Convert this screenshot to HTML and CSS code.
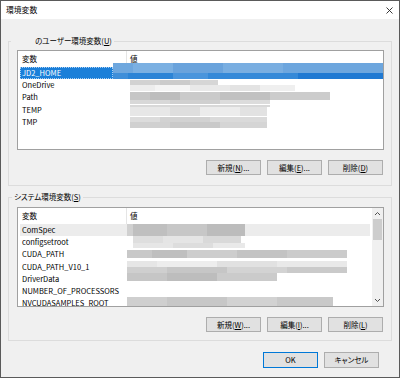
FILE: index.html
```html
<!DOCTYPE html>
<html lang="ja">
<head>
<meta charset="utf-8">
<title>環境変数</title>
<link rel="stylesheet" href="styles.css">
</head>
<body>
<div class="window">
  <div class="titlebar">
    <span class="title">環境変数</span>
    <svg class="close" width="7" height="7" viewBox="0 0 7 7"><path d="M0.5 0.5 L6.5 6.5 M6.5 0.5 L0.5 6.5" stroke="#222" stroke-width="0.9" fill="none"/></svg>
  </div>
  <div class="content">
    <div class="group g1">
      <div class="legend legend-user">のユーザー環境変数(<u>U</u>)</div>
      <div class="listview lv1">
        <div class="lv-main">
          <div class="lv-header"><div class="col-name">変数</div><div class="col-val">値</div></div>
          <div class="row selected">
            <div class="name">JD2_HOME</div>
            <div class="val sel-val"><div class="b sb1"></div><div class="b sb2"></div></div>
          </div>
          <div class="row"><div class="name">OneDrive</div><div class="val v1"><div class="b u1a"></div><div class="b u1b"></div></div></div>
          <div class="row"><div class="name">Path</div><div class="val v1"><div class="b u2a"></div><div class="b u2b"></div></div></div>
          <div class="row"><div class="name">TEMP</div><div class="val v1"><div class="b u3a"></div><div class="b u3b"></div></div></div>
          <div class="row"><div class="name">TMP</div><div class="val v1"><div class="b u4a"></div><div class="b u4b"></div></div></div>
        </div>
      </div>
      <div class="btnrow">
        <button class="btn">新規(<u>N</u>)...</button>
        <button class="btn">編集(<u>E</u>)...</button>
        <button class="btn">削除(<u>D</u>)</button>
      </div>
    </div>

    <div class="group g2">
      <div class="legend legend-sys">システム環境変数(<u>S</u>)</div>
      <div class="listview lv2">
        <div class="lv-main">
          <div class="lv-header"><div class="col-name">変数</div><div class="col-val">値</div></div>
          <div class="row hover"><div class="name">ComSpec</div><div class="val v2"><div class="b s1a"></div></div></div>
          <div class="row"><div class="name">configsetroot</div><div class="val v2"><div class="b s2a"></div><div class="b s2b"></div></div></div>
          <div class="row"><div class="name">CUDA_PATH</div><div class="val v2"><div class="b s3a"></div><div class="b s3b"></div></div></div>
          <div class="row"><div class="name">CUDA_PATH_V10_1</div><div class="val v2"><div class="b s4a"></div><div class="b s4b"></div></div></div>
          <div class="row"><div class="name">DriverData</div><div class="val v2"><div class="b s5a"></div></div></div>
          <div class="row"><div class="name">NUMBER_OF_PROCESSORS</div><div class="val v2"></div></div>
          <div class="row"><div class="name">NVCUDASAMPLES_ROOT</div><div class="val v2"><div class="b s7a"></div></div></div>
        </div>
        <div class="scrollbar">
          <div class="sb-btn"><svg width="7" height="5" viewBox="0 0 7 5"><path d="M1 4 L3.5 1.5 L6 4" stroke="#505050" stroke-width="1" fill="none"/></svg></div>
          <div class="sb-track"><div class="sb-thumb"></div></div>
          <div class="sb-btn"><svg width="7" height="5" viewBox="0 0 7 5"><path d="M1 1 L3.5 3.5 L6 1" stroke="#505050" stroke-width="1" fill="none"/></svg></div>
        </div>
      </div>
      <div class="btnrow">
        <button class="btn">新規(<u>W</u>)...</button>
        <button class="btn">編集(<u>I</u>)...</button>
        <button class="btn">削除(<u>L</u>)</button>
      </div>
    </div>

    <div class="dlgbtns">
      <button class="btn default">OK</button>
      <button class="btn">キャンセル</button>
    </div>
  </div>
</div>
</body>
</html>
```

FILE: styles.css
```css
html, body {
  margin: 0;
  padding: 0;
  background: #f0f0f0;
}

.window {
  width: 400px;
  height: 378px;
  box-sizing: border-box;
  border: 1px solid #5a5a5a;
  background: #f0f0f0;
  font-family: "Noto Sans CJK JP", sans-serif;
  font-size: 7.5px;
  font-weight: 400;
  font-feature-settings: "palt";
  color: #000;
  display: flex;
  flex-direction: column;
  overflow: hidden;
}

.titlebar {
  height: 18px;
  background: #fff;
  display: flex;
  align-items: center;
  justify-content: space-between;
  padding: 0 6px 0 5px;
  flex: none;
}

.title {
  font-size: 7.8px;
  line-height: 12px;
}

.close {
  display: block;
}

.content {
  flex: 1;
  display: flex;
  flex-direction: column;
  padding: 0 7px;
}

.group {
  border: 1px solid #dcdcdc;
  display: flex;
  flex-direction: column;
  padding: 0 7px 10px 8px;
}

.g1 {
  margin-top: 22px;
}

.g2 {
  margin-top: 11px;
  padding-bottom: 8px;
}

.legend {
  align-self: flex-start;
  height: 12px;
  line-height: 12px;
  margin: -7px 0 0 -6px;
  padding: 0 2px;
  background: #f0f0f0;
  white-space: nowrap;
}

.legend-user {
  padding-left: 24px;
}

.legend-sys {
  margin-left: -5px;
}

.listview {
  height: 100px;
  box-sizing: border-box;
  border: 1px solid #a0a0a0;
  background: #fff;
  display: flex;
  overflow: hidden;
}

.lv1 {
  margin-top: 3px;
}

.lv2 {
  margin-top: 4px;
}

.lv-main {
  flex: 1;
  display: flex;
  flex-direction: column;
  min-width: 0;
}

.lv-header {
  height: 16px;
  display: flex;
  align-items: center;
  flex: none;
  position: relative;
  z-index: 0;
}

.col-name {
  width: 104px;
  padding-left: 4px;
  height: 16px;
  line-height: 16px;
  border-right: 1px solid #e5e5e5;
}

.col-val {
  padding-left: 3px;
  line-height: 16px;
}

.row {
  height: 12.2px;
  display: flex;
  flex: none;
  line-height: 12.2px;
  position: relative;
  z-index: 1;
}

.name {
  width: 93px;
  margin-left: 2px;
  padding-left: 2px;
  white-space: nowrap;
  flex: none;
}

.val {
  flex: 1;
  display: flex;
  flex-direction: column;
  min-width: 0;
}

.b {
  flex: none;
}

.v1 {
  padding-left: 15px;
  padding-top: 1px;
}

.v2 {
  padding-left: 12px;
}

/* selected row */
.selected .name {
  background: #1a7fd9;
  color: #fff;
  box-sizing: border-box;
  outline: 1px dotted #a9cff3;
  outline-offset: -1px;
}

.sel-val {
  margin-top: -4px;
  height: 16.2px;
}

.sb1 {
  height: 10px;
  background: linear-gradient(90deg, #6ea7de 0 20px, #7bb0e2 20px 60px, #6aa3dc 60px 110px, #79aee1 110px 170px, #6da6de 170px 100%);
}

.sb2 {
  height: 6.2px;
  background: linear-gradient(90deg, #3e8ed9 0 15px, #2c84d6 15px 60px, #4a95dc 60px 95px, #3589d8 95px 185px, #2079d2 185px 100%);
}

.u1a {
  height: 5px;
  width: 88px;
  background: linear-gradient(90deg, #d2d2d2 0 30px, #cbcbcb 30px 60px, #d6d6d6 60px 100%);
}

.u1b {
  height: 6px;
  width: 165px;
  background: linear-gradient(90deg, #ededed 0 25px, #f4f4f4 25px 60px, #e9e9e9 60px 100px, #e3e3e3 100px 130px, #efefef 130px 100%);
}

.u2a {
  height: 8px;
  width: 200px;
  background: linear-gradient(90deg, #c6c6c6 0 20px, #bdbdbd 20px 50px, #cacaca 50px 90px, #c1c1c1 90px 140px, #cccccc 140px 100%);
}

.u2b {
  height: 4px;
  width: 140px;
  background: linear-gradient(90deg, #d8d8d8 0 40px, #d0d0d0 40px 90px, #dcdcdc 90px 100%);
}

.u3a {
  height: 2px;
  width: 140px;
  background: #d8d8d8;
}

.u3b {
  height: 9px;
  width: 137px;
  background: linear-gradient(90deg, #e7e7e7 0 40px, #dedede 40px 70px, #ececec 70px 110px, #e2e2e2 110px 100%);
}

.u4a {
  height: 5px;
  width: 137px;
  background: linear-gradient(90deg, #dcdcdc 0 30px, #d2d2d2 30px 80px, #dadada 80px 100%);
}

.u4b {
  height: 6px;
  width: 137px;
  background: linear-gradient(90deg, #d0d0d0 0 40px, #c9c9c9 40px 90px, #d5d5d5 90px 100%);
}

/* system list */
.hover {
  background: #ececec;
  margin-left: 2px;
  margin-right: 2px;
}

.hover .name {
  margin-left: 0;
}

.s1a {
  height: 12px;
  width: 118px;
  background: linear-gradient(90deg, #d0d0d0 0 6px, #bfbfbf 6px 40px, #c7c7c7 40px 80px, #bcbcbc 80px 100%);
}

.s2a {
  height: 7px;
  width: 108px;
  margin-left: 6px;
  background: linear-gradient(90deg, #dedede 0 30px, #e5e5e5 30px 70px, #d9d9d9 70px 100%);
}

.s2b {
  height: 5px;
  width: 112px;
  margin-left: 6px;
  background: linear-gradient(90deg, #e6e6e6 0 40px, #dddddd 40px 80px, #e9e9e9 80px 100%);
}

.s3a {
  height: 2px;
}

.s3b {
  height: 8px;
  width: 220px;
  background: linear-gradient(90deg, #c8c8c8 0 25px, #bfbfbf 25px 60px, #cdcdcd 60px 110px, #c3c3c3 110px 160px, #cbcbcb 160px 100%);
}

.s4a {
  height: 6px;
  width: 220px;
  background: linear-gradient(90deg, #e6e6e6 0 30px, #ededed 30px 90px, #e1e1e1 90px 150px, #e9e9e9 150px 100%);
}

.s4b {
  height: 6px;
  width: 220px;
  background: linear-gradient(90deg, #cfcfcf 0 40px, #c6c6c6 40px 100px, #d3d3d3 100px 160px, #cacaca 160px 100%);
}

.s5a {
  height: 8px;
  width: 150px;
  background: linear-gradient(90deg, #c6c6c6 0 40px, #bdbdbd 40px 90px, #cbcbcb 90px 100%);
}

.s7a {
  height: 10px;
  width: 206px;
  background: linear-gradient(90deg, #cfcfcf 0 40px, #c7c7c7 40px 100px, #d2d2d2 100px 150px, #c9c9c9 150px 100%);
}

.scrollbar {
  width: 11px;
  flex: none;
  background: #f0f0f0;
  display: flex;
  flex-direction: column;
}

.sb-btn {
  height: 11px;
  display: flex;
  align-items: center;
  justify-content: center;
  flex: none;
}

.sb-btn svg {
  display: block;
}

.sb-track {
  flex: 1;
  padding: 0 1px;
}

.sb-thumb {
  height: 21px;
  background: #cdcdcd;
}

.btnrow {
  display: flex;
  justify-content: flex-end;
  gap: 6px;
  margin-top: 10px;
  margin-right: 1px;
}

.btn {
  width: 55px;
  height: 15px;
  box-sizing: border-box;
  border: 1px solid #adadad;
  background: #e1e1e1;
  font: inherit;
  line-height: 12px;
  padding: 0;
  color: #000;
  margin: 0;
}

.dlgbtns {
  display: flex;
  justify-content: flex-end;
  gap: 6px;
  margin-top: 11px;
  margin-right: 13px;
}

.dlgbtns .btn {
  height: 16px;
}

.btn.default {
  border-color: #0078d7;
}
```
